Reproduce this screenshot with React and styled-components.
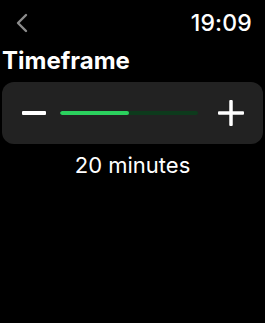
import React from 'react';
import styled, { createGlobalStyle } from 'styled-components';

const GlobalStyle = createGlobalStyle`
  html, body {
    margin: 0;
    padding: 0;
    background: #000;
  }
  body {
    font-family: Inter, "Noto Sans", sans-serif;
    color: #fff;
  }
`;

const Screen = styled.div`
  width: 265px;
  height: 323px;
  background: #000;
  display: flex;
  flex-direction: column;
`;

const StatusBar = styled.div`
  display: flex;
  align-items: center;
  justify-content: space-between;
  height: 44px;
  padding: 0 13px 0 15px;
  box-sizing: border-box;
`;

const BackButton = styled.button`
  display: flex;
  align-items: center;
  background: none;
  border: 0;
  padding: 0;
  margin-top: 2px;
  color: #8c8c8c;
`;

const Clock = styled.span`
  font-size: 23px;
  font-weight: 500;
  letter-spacing: 0.2px;
  margin-top: 2px;
`;

const Title = styled.h1`
  margin: 3px 0 0 2px;
  font-size: 24px;
  font-weight: 700;
  line-height: 28px;
`;

const Stepper = styled.div`
  margin: 7px 2px 0;
  height: 62px;
  border-radius: 12px;
  background: #222222;
  display: flex;
  align-items: center;
  padding: 0 19px 0 20px;
`;

const StepButton = styled.button`
  display: flex;
  align-items: center;
  justify-content: center;
  padding: 0;
  border: 0;
  background: none;
  color: #fff;
`;

const Track = styled.div`
  flex: 1;
  height: 4px;
  margin: 0 20px 0 14px;
  border-radius: 2px;
  background: #0d3a1c;
  overflow: hidden;
`;

const Fill = styled.div`
  height: 100%;
  border-radius: 2px;
  background: #2bd15e;
`;

const Caption = styled.div`
  margin-top: 8px;
  text-align: center;
  font-size: 22px;
  line-height: 26px;
  font-weight: 400;
`;

export default function App() {
  const value = 20;
  const max = 40;
  return (
    <Screen>
      <GlobalStyle />
      <StatusBar>
        <BackButton aria-label="Back">
          <svg width="13" height="20" viewBox="0 0 13 20" fill="none">
            <path d="M11 2L3 10L11 18" stroke="currentColor" strokeWidth="2.4" strokeLinecap="round" strokeLinejoin="round" />
          </svg>
        </BackButton>
        <Clock>19:09</Clock>
      </StatusBar>
      <Title>Timeframe</Title>
      <Stepper>
        <StepButton aria-label="Decrease">
          <svg width="24" height="24" viewBox="0 0 24 24">
            <rect x="0" y="10" width="24" height="4" rx="1" fill="currentColor" />
          </svg>
        </StepButton>
        <Track>
          <Fill style={{ width: `${(value / max) * 100}%` }} />
        </Track>
        <StepButton aria-label="Increase">
          <svg width="26" height="26" viewBox="0 0 26 26">
            <rect x="0" y="11.25" width="26" height="3.5" rx="1" fill="currentColor" />
            <rect x="11.25" y="0" width="3.5" height="26" rx="1" fill="currentColor" />
          </svg>
        </StepButton>
      </Stepper>
      <Caption>20 minutes</Caption>
    </Screen>
  );
}
